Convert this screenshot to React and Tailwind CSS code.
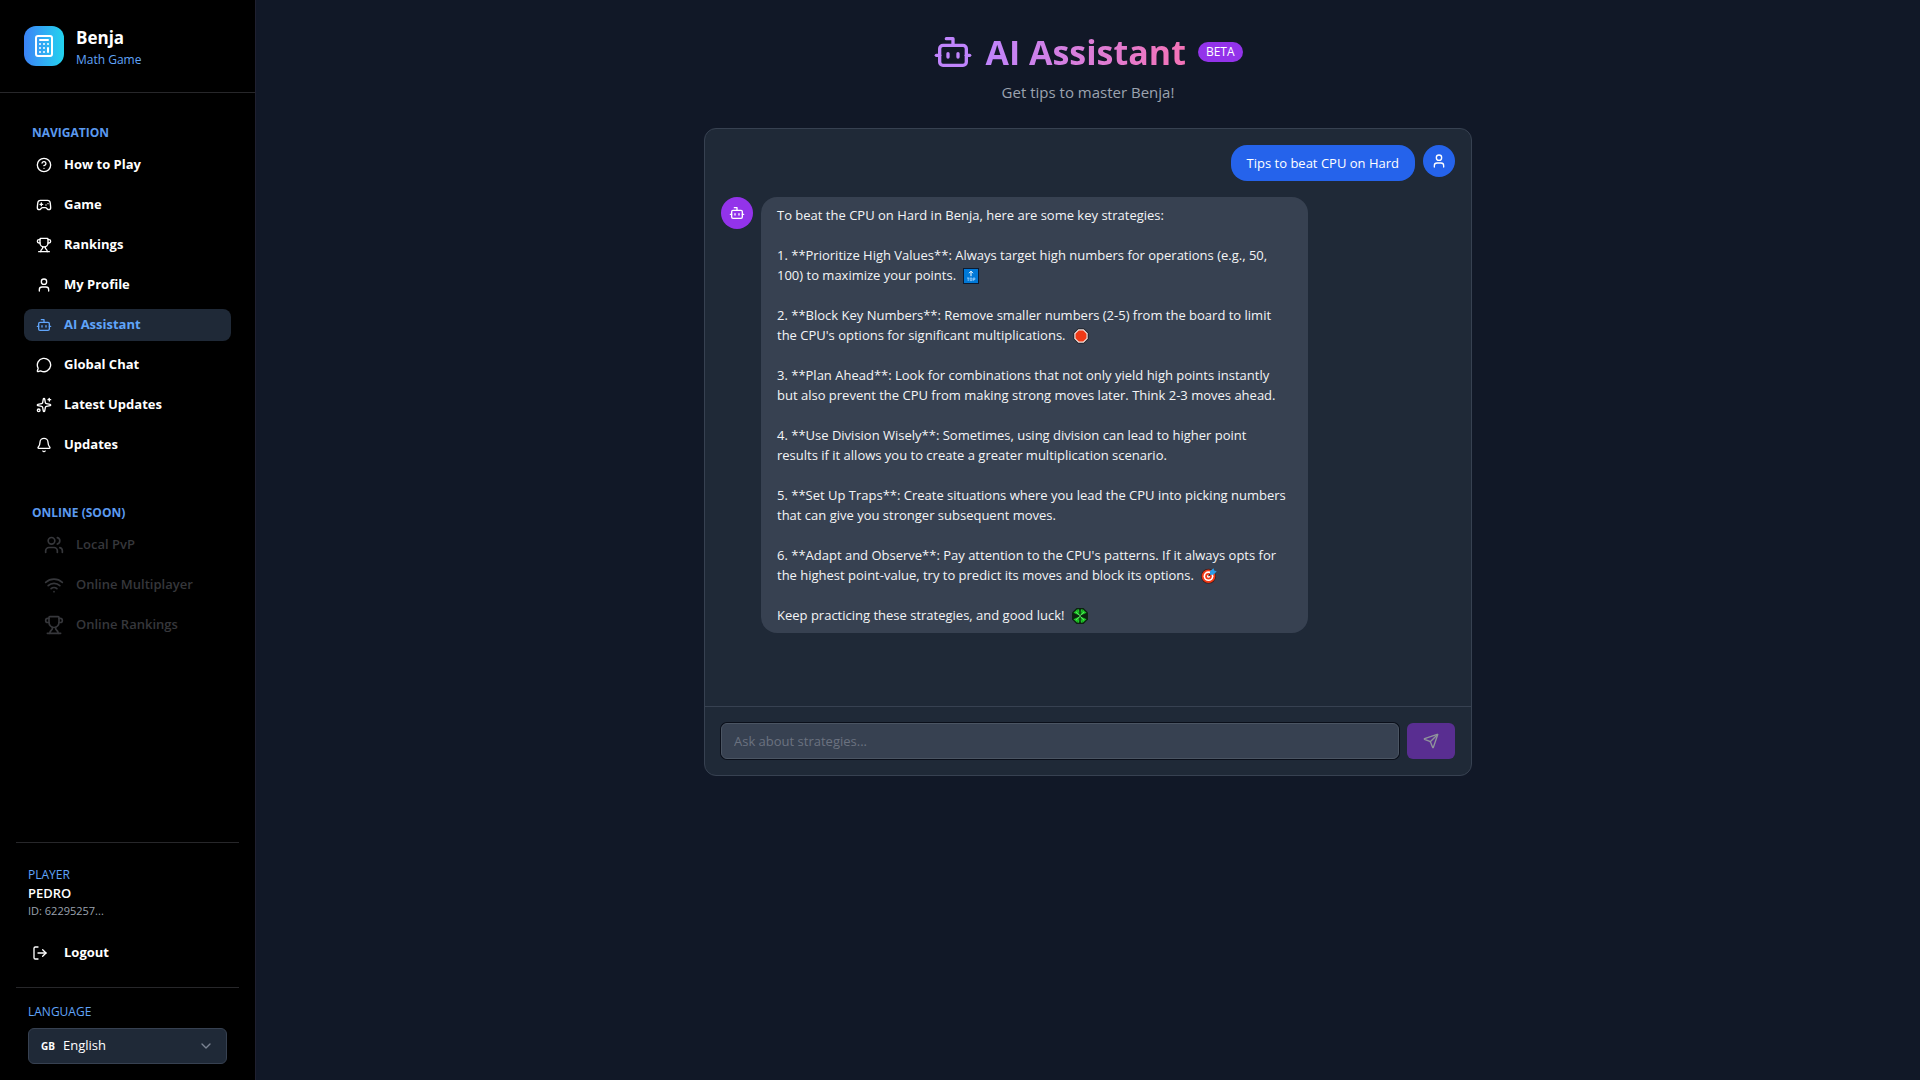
import React, { useState } from "react";
import {
  Bell,
  Bot,
  Calculator,
  ChevronDown,
  CircleHelp,
  Gamepad2,
  LogOut,
  MessageCircle,
  Send,
  Sparkles,
  Trophy,
  User,
  Users,
  Wifi,
} from "lucide-react";

const navItems = [
  { label: "How to Play", icon: CircleHelp },
  { label: "Game", icon: Gamepad2 },
  { label: "Rankings", icon: Trophy },
  { label: "My Profile", icon: User },
  { label: "AI Assistant", icon: Bot },
  { label: "Global Chat", icon: MessageCircle },
  { label: "Latest Updates", icon: Sparkles },
  { label: "Updates", icon: Bell },
];

const onlineItems = [
  { label: "Local PvP", icon: Users },
  { label: "Online Multiplayer", icon: Wifi },
  { label: "Online Rankings", icon: Trophy },
];

const TopEmoji = () => (
  <svg viewBox="0 0 16 16" className="ml-1 inline-block size-4 align-text-bottom">
    <rect width="16" height="16" fill="#0b1b33" />
    <rect x="1" y="1" width="14" height="14" fill="#0078d7" />
    <path d="M8 3.2v5M6 5.2l2-2 2 2" fill="none" stroke="#fff" strokeWidth="1" />
    <path
      d="M4 10h2.4M5.2 10v3M7.2 10h1.6v2.6H7.2zM10.2 13v-3h1.6v1.6h-1.6"
      fill="none"
      stroke="#a5d4ff"
      strokeWidth=".8"
    />
  </svg>
);

const StopEmoji = () => (
  <svg viewBox="0 0 16 16" className="ml-1 inline-block size-4 align-text-bottom">
    <path d="M5 .5h6L15.5 5v6L11 15.5H5L.5 11V5z" fill="#1b1b1f" />
    <path d="M5.3 1.3h5.4l4 4v5.4l-4 4H5.3l-4-4V5.3z" fill="#f3e3e0" />
    <path d="M5.8 2.5h4.4l3.3 3.3v4.4l-3.3 3.3H5.8l-3.3-3.3V5.8z" fill="#f03a17" />
  </svg>
);

const TargetEmoji = () => (
  <svg viewBox="0 0 16 16" className="ml-1 inline-block size-4 align-text-bottom">
    <circle cx="7.5" cy="8.2" r="7.4" fill="#3b1512" />
    <circle cx="7.5" cy="8.2" r="6.8" fill="#f03a17" />
    <circle cx="7.5" cy="8.2" r="4.9" fill="#fff" />
    <circle cx="7.5" cy="8.2" r="3.3" fill="#f03a17" />
    <circle cx="7.5" cy="8.2" r="1.5" fill="#fff" />
    <path d="M7.5 8.2l4-4" stroke="#1b1b1f" strokeWidth="1.2" />
    <path d="M9 6.8V3l3.5-2.8.7 2.3 2.5.7-3.2 3.6z" fill="#2b9be8" />
  </svg>
);

const CloverEmoji = () => (
  <svg viewBox="0 0 16 16" className="ml-1 inline-block size-4 align-text-bottom">
    <path d="M4.500 0h7L16 4.500v7L11.500 16h-7L0 11.500v-7z" fill="#0c2410" />
    <g fill="#1fc928">
      <path d="M7.800 7.300L5 1.500 7.200 1.200 8 3l.8-1.800 2.200.3z" />
      <path d="M7.800 8.700L5 14.500l2.200.3L8 13l.8 1.800 2.200-.3z" />
      <path d="M7.300 7.500L1.500 4.800 3.500 3l1.500-1.500L7.700 7z" />
      <path d="M8.700 7.500l5.800-2.700L12.500 3 11 1.500 8.300 7z" />
      <path d="M7.300 8.500l-5.800 2.700 2 1.800L5 14.500 7.700 9z" />
      <path d="M8.700 8.500l5.800 2.700-2 1.800-1.500 1.500L8.300 9z" />
    </g>
    <path d="M4 4l8 8M12 4l-8 8" stroke="#7be87f" strokeWidth=".6" />
    <path d="M8 1v5M8 10v5" stroke="#0c2410" strokeWidth="1.4" />
  </svg>
);

const Sidebar = () => {
  const [active, setActive] = useState("AI Assistant");

  return (
    <aside className="w-64 shrink-0 min-h-screen flex flex-col bg-black border-r border-[#1f2030]">
      <div className="p-6 flex items-center gap-3 border-b border-[#27272a]">
        <div className="size-10 rounded-xl bg-linear-to-r from-[#3b82f6] to-[#22d3ee] flex items-center justify-center">
          <Calculator className="size-6" />
        </div>
        <div>
          <h2 className="text-[17px] leading-7 font-bold">Benja</h2>
          <p className="text-xs text-[#60a5fa]">Math Game</p>
        </div>
      </div>

      <div className="flex-1 px-6 pt-6">
        <h3 className="h-8 px-2 flex items-center text-xs font-bold text-[#5b9af0]">
          NAVIGATION
        </h3>
        <nav className="flex flex-col gap-2">
          {navItems.map(({ label, icon: Icon }) => (
            <a
              key={label}
              href="#"
              onClick={(e) => {
                e.preventDefault();
                setActive(label);
              }}
              className={`h-8 px-3 flex items-center gap-3 rounded-lg text-[13px] font-bold ${
                active === label ? "bg-[#1f2937] text-[#60a5fa]" : "text-white"
              }`}
            >
              <Icon className="size-4" />
              {label}
            </a>
          ))}
        </nav>

        <h3 className="h-8 px-2 mt-9 flex items-center text-xs font-bold text-[#5b9af0]">
          ONLINE (SOON)
        </h3>
        <div className="flex flex-col gap-2">
          {onlineItems.map(({ label, icon: Icon }) => (
            <button
              key={label}
              type="button"
              disabled
              className="h-8 px-5 flex items-center gap-3 text-[13px] font-semibold text-[#36373b]"
            >
              <Icon className="size-5" />
              {label}
            </button>
          ))}
        </div>
      </div>

      <div className="px-4">
        <div className="border-t border-[#27272a] px-3 pt-6 pb-4">
          <p className="text-xs text-[#60a5fa]">PLAYER</p>
          <p className="text-[13px] leading-5 font-semibold">PEDRO</p>
          <p className="text-[11px] leading-4 text-[#9ca3af]">ID: 62295257...</p>
          <button
            type="button"
            className="mt-4 h-9 px-1 flex items-center gap-4 text-[13px] font-bold"
          >
            <LogOut className="size-4" />
            Logout
          </button>
        </div>
        <div className="border-t border-[#27272a] px-3 py-4">
          <label htmlFor="language" className="block mb-2 text-xs text-[#60a5fa]">
            LANGUAGE
          </label>
          <div className="h-9 px-3 flex items-center rounded-md border border-[#374151] bg-[#1f2937]">
            <span className="w-[22px] text-[10px] font-bold">GB</span>
            <select
              id="language"
              className="flex-1 appearance-none bg-transparent text-[13px] font-medium outline-none"
            >
              <option>English</option>
            </select>
            <ChevronDown className="size-4 text-[#7b8492]" />
          </div>
        </div>
      </div>
    </aside>
  );
};

const BotMessage = () => (
  <div className="max-w-4/5 flex items-start gap-2">
    <div className="size-8 shrink-0 rounded-full bg-[#9333ea] flex items-center justify-center">
      <Bot className="size-4" />
    </div>
    <div className="flex-1 flex flex-col gap-5 rounded-2xl bg-[#374151] px-4 py-2 text-[13px] leading-5 text-[#f3f4f6]">
      <p>To beat the CPU on Hard in Benja, here are some key strategies:</p>
      <p>
        1. **Prioritize High Values**: Always target high numbers for operations (e.g., 50,
        <br />
        100) to maximize your points. <TopEmoji />
      </p>
      <p>
        2. **Block Key Numbers**: Remove smaller numbers (2-5) from the board to limit
        <br />
        the CPU's options for significant multiplications. <StopEmoji />
      </p>
      <p>
        3. **Plan Ahead**: Look for combinations that not only yield high points instantly
        <br />
        but also prevent the CPU from making strong moves later. Think 2-3 moves ahead.
      </p>
      <p>
        4. **Use Division Wisely**: Sometimes, using division can lead to higher point
        <br />
        results if it allows you to create a greater multiplication scenario.
      </p>
      <p>
        5. **Set Up Traps**: Create situations where you lead the CPU into picking numbers
        <br />
        that can give you stronger subsequent moves.
      </p>
      <p>
        6. **Adapt and Observe**: Pay attention to the CPU's patterns. If it always opts for
        <br />
        the highest point-value, try to predict its moves and block its options. <TargetEmoji />
      </p>
      <p>
        Keep practicing these strategies, and good luck! <CloverEmoji />
      </p>
    </div>
  </div>
);

const ChatCard = () => {
  const [text, setText] = useState("");

  return (
    <section className="h-[60vh] flex flex-col rounded-xl border border-[#374151] bg-[#1f2937]">
      <div className="flex-1 p-4 flex flex-col gap-4">
        <div className="flex justify-end items-start gap-2">
          <p className="rounded-2xl bg-[#2563eb] px-4 py-2 text-[13px] leading-5">
            Tips to beat CPU on Hard
          </p>
          <div className="size-8 rounded-full bg-[#2563eb] flex items-center justify-center">
            <User className="size-4" />
          </div>
        </div>
        <BotMessage />
      </div>

      <form
        onSubmit={(e) => e.preventDefault()}
        className="p-4 flex gap-2 border-t border-[#374151]"
      >
        <input
          type="text"
          aria-label="Ask about strategies"
          placeholder="Ask about strategies..."
          value={text}
          onChange={(e) => setText(e.target.value)}
          className="h-9 flex-1 rounded-md border border-[#4b5563] bg-[#374151] px-3 text-[13px] ring-1 ring-[#0a0f1a] outline-none placeholder:text-[#6b7280]"
        />
        <button
          type="submit"
          aria-label="Send"
          disabled={!text}
          className="h-9 w-12 rounded-md bg-[#9333ea] flex items-center justify-center disabled:opacity-50"
        >
          <Send className="size-4" />
        </button>
      </form>
    </section>
  );
};

const App = () => {
  return (
    <div className="min-h-screen flex bg-[#111827] text-white font-['Open_Sans','Noto_Sans',sans-serif]">
      <Sidebar />
      <main className="flex-1 p-8">
        <div className="mx-auto max-w-3xl">
          <header className="mb-6 flex flex-col items-center gap-2">
            <div className="flex items-center gap-3">
              <Bot className="size-10 text-[#c084fc]" />
              <h1 className="text-[34px] leading-10 font-bold bg-linear-to-r from-[#c084fc] to-[#f472b6] bg-clip-text text-transparent">
                AI Assistant
              </h1>
              <span className="rounded-full bg-[#9333ea] px-2 py-0.5 text-xs">BETA</span>
            </div>
            <p className="text-[15px] leading-6 text-[#9ca3af]">Get tips to master Benja!</p>
          </header>
          <ChatCard />
        </div>
      </main>
    </div>
  );
};

export default App;
